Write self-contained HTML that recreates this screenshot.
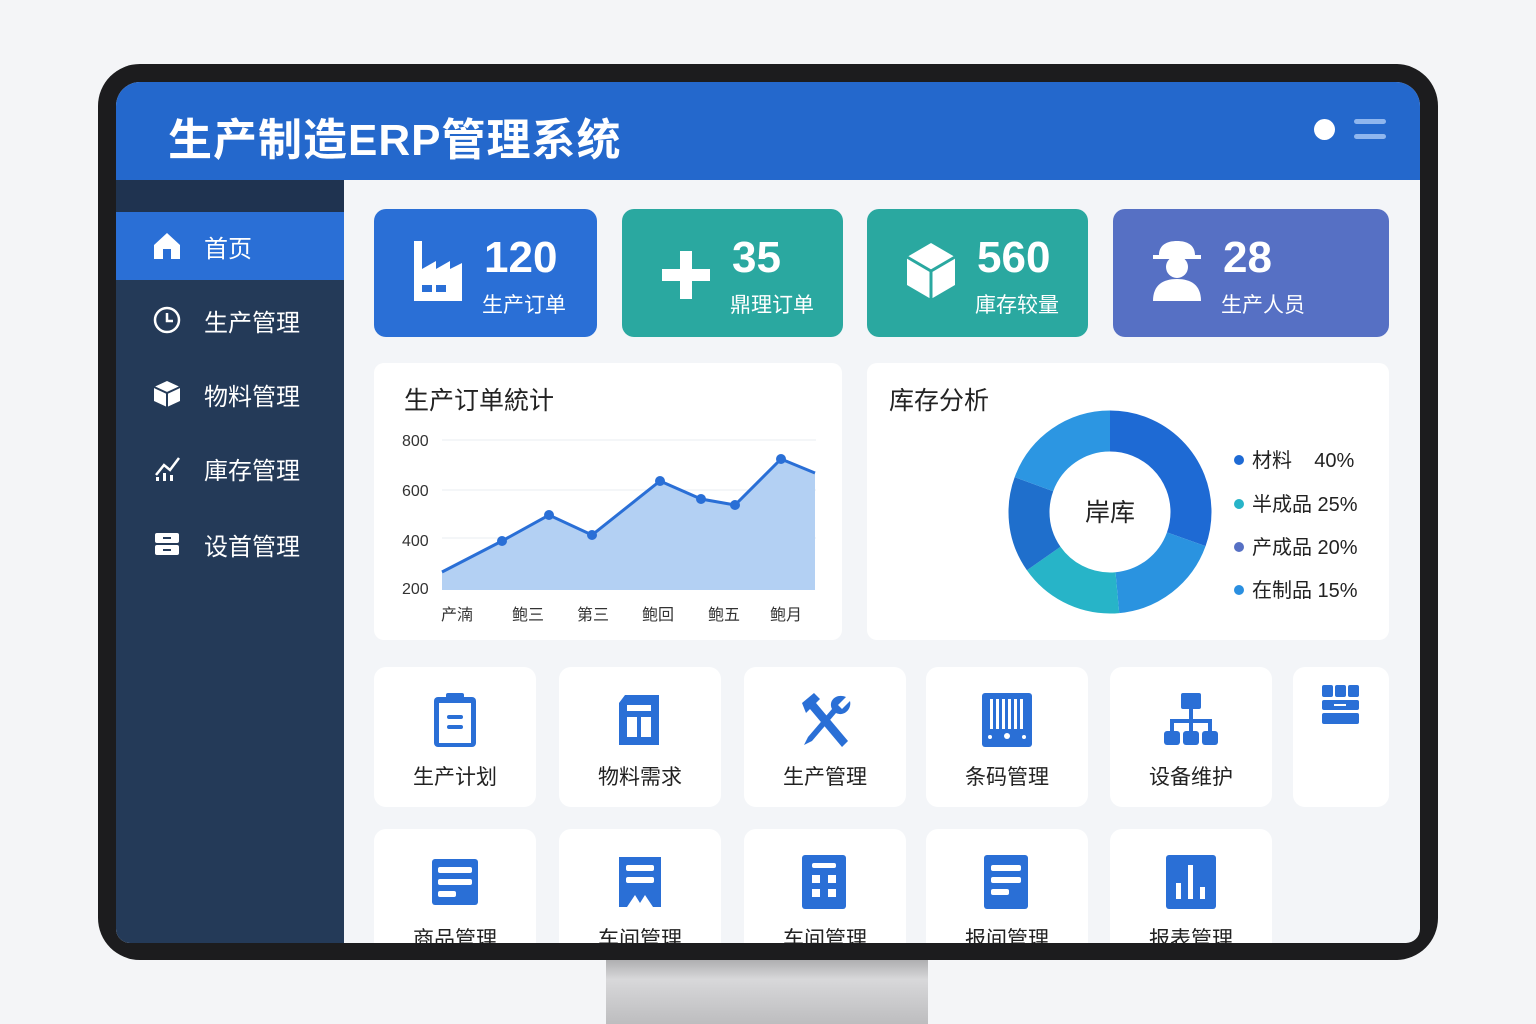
<!DOCTYPE html>
<html><head><meta charset="utf-8"><style>
*{margin:0;padding:0;box-sizing:border-box}
body{width:1536px;height:1024px;background:#f4f5f7;position:relative;overflow:hidden;font-family:"Liberation Sans","Noto Sans CJK SC",sans-serif}
.abs{position:absolute}
.stand{left:606px;top:950px;width:322px;height:74px;background:linear-gradient(#9a9a9c,#d8d8da 40%,#bdbdbf)}
.bezel{left:98px;top:64px;width:1340px;height:896px;background:#1c1c1e;border-radius:42px}
.screen{left:116px;top:82px;width:1304px;height:861px;background:#f3f5f8;border-radius:24px 24px 14px 14px;overflow:hidden}
.header{left:0;top:0;width:1304px;height:98px;background:#2468cc}
.title{left:52px;top:22px;color:#fff;font-size:44px;font-weight:bold;letter-spacing:1px}
.side{left:0;top:98px;width:228px;height:763px;background:#243a58}
.nav{left:0;width:228px;height:68px;color:#fff;font-size:24px;display:flex;align-items:center;padding-left:36px}
.nav svg{margin-right:22px}
.card{top:127px;height:128px;border-radius:12px;color:#fff}
.card .n{position:absolute;left:110px;top:24px;font-size:44px;font-weight:bold}
.card .l{position:absolute;left:108px;top:80px;font-size:21px}
.card svg{position:absolute;left:36px;top:28px}
.panel{background:#fff;border-radius:10px;top:281px;height:277px}
.ptitle{position:absolute;left:30px;top:18px;font-size:25px;color:#222}
.tile{background:#fff;border-radius:12px;width:162px;height:140px}
.tile svg{position:absolute;left:50%;margin-left:-29px;top:24px}
.tile span{position:absolute;left:0;width:100%;text-align:center;top:94px;font-size:21px;color:#222}
.leg{font-size:20px;color:#222;position:absolute;left:1118px}
.leg i{display:inline-block;width:10px;height:10px;border-radius:50%;margin-right:8px;vertical-align:2px}
</style></head><body>
<div class="abs stand"></div>
<div class="abs bezel"></div>
<div class="abs screen">
 <div class="abs header"></div>
 <div class="abs title">生产制造ERP管理系统</div>
 <div class="abs" style="left:1198px;top:37px;width:21px;height:21px;border-radius:50%;background:#fff"></div>
 <div class="abs" style="left:1238px;top:37px;width:32px;height:5px;border-radius:3px;background:#8fb6ee"></div>
 <div class="abs" style="left:1238px;top:52px;width:32px;height:5px;border-radius:3px;background:#8fb6ee"></div>
 <div class="abs side"></div>
 <div class="abs" style="left:0;top:98px;width:228px;height:32px;background:#1f3350"></div>
 <div class="abs nav" style="top:130px;background:#2a6fd6"><svg width="30" height="30" viewBox="0 0 30 30"><path d="M2 14 15 2 28 14V28H19V18H11V28H2Z" fill="#fff"/></svg>首页</div>
 <div class="abs nav" style="top:204px"><svg width="30" height="30" viewBox="0 0 30 30"><circle cx="15" cy="15" r="12" fill="none" stroke="#fff" stroke-width="2.5"/><path d="M15 8V16H21" fill="none" stroke="#fff" stroke-width="2.5"/></svg>生产管理</div>
 <div class="abs nav" style="top:278px"><svg width="30" height="30" viewBox="0 0 30 30"><path d="M15 2 28 8V22L15 28 2 22V8Z" fill="#fff"/><path d="M2 8 15 14 28 8M15 14V28" stroke="#243a58" stroke-width="2" fill="none"/></svg>物料管理</div>
 <div class="abs nav" style="top:352px"><svg width="30" height="30" viewBox="0 0 30 30"><path d="M4 22 12 12 18 17 27 5" fill="none" stroke="#fff" stroke-width="2.5"/><rect x="4" y="24" width="3" height="4" fill="#fff"/><rect x="11" y="20" width="3" height="8" fill="#fff"/><rect x="18" y="22" width="3" height="6" fill="#fff"/></svg>庫存管理</div>
 <div class="abs nav" style="top:428px"><svg width="30" height="30" viewBox="0 0 30 30"><rect x="3" y="4" width="24" height="10" rx="2" fill="#fff"/><rect x="3" y="16" width="24" height="10" rx="2" fill="#fff"/><rect x="11" y="8" width="8" height="2" fill="#243a58"/><rect x="11" y="20" width="8" height="2" fill="#243a58"/></svg>设首管理</div>

 <div class="abs card" style="left:258px;width:223px;background:#2a6fd6"><svg width="56" height="66" viewBox="0 0 56 66"><path d="M4 4H12V32L26 24V32L40 24V32L52 26V64H4Z" fill="#fff"/><rect x="12" y="48" width="10" height="7" fill="#2a6fd6"/><rect x="26" y="48" width="10" height="7" fill="#2a6fd6"/></svg><div class="n">120</div><div class="l">生产订单</div></div>
 <div class="abs card" style="left:506px;width:221px;background:#2aa8a0"><svg width="56" height="66" viewBox="0 0 56 66"><path d="M22 14H34V32H52V44H34V62H22V44H4V32H22Z" fill="#fff"/></svg><div class="n">35</div><div class="l">鼎理订单</div></div>
 <div class="abs card" style="left:751px;width:221px;background:#2aa8a0"><svg width="56" height="66" viewBox="0 0 56 66"><path d="M28 6 52 20V48L28 62 4 48V20Z" fill="#fff"/><path d="M4 20 28 34 52 20M28 34V62" stroke="#2aa8a0" stroke-width="3" fill="none"/></svg><div class="n">560</div><div class="l">庫存较量</div></div>
 <div class="abs card" style="left:997px;width:276px;background:#5670c4"><svg width="56" height="66" viewBox="0 0 56 66"><path d="M10 18C10 8 18 4 28 4S46 8 46 18H52V22H4V18Z" fill="#fff"/><circle cx="28" cy="30" r="11" fill="#fff"/><path d="M4 64C4 48 14 42 28 42S52 48 52 64Z" fill="#fff"/></svg><div class="n">28</div><div class="l">生产人员</div></div>

 <div class="abs panel" style="left:258px;width:468px">
  <div class="ptitle">生产订单統计</div>
  <svg class="abs" style="left:0;top:0" width="468" height="277" viewBox="258 281 468 277">
   <g font-size="16" fill="#333" font-family="Liberation Sans">
    <text x="286" y="364">800</text><text x="286" y="414">600</text><text x="286" y="464">400</text><text x="286" y="512">200</text>
    <text x="325" y="538">产湳</text><text x="396" y="538">鲍三</text><text x="461" y="538">第三</text><text x="526" y="538">鲍回</text><text x="592" y="538">鲍五</text><text x="654" y="538">鲍月</text>
   </g>
   <g stroke="#e8ecf2"><line x1="326" y1="358" x2="700" y2="358"/><line x1="326" y1="408" x2="700" y2="408"/><line x1="326" y1="456" x2="700" y2="456"/></g>
   <path d="M326 490 386 459 433 433 476 453 544 399 585 417 619 423 665 377 699 391V508H326Z" fill="#b3d0f3"/>
   <path d="M326 490 386 459 433 433 476 453 544 399 585 417 619 423 665 377 699 391" fill="none" stroke="#2a6fd6" stroke-width="3"/>
   <g fill="#2a6fd6"><circle cx="386" cy="459" r="5"/><circle cx="433" cy="433" r="5"/><circle cx="476" cy="453" r="5"/><circle cx="544" cy="399" r="5"/><circle cx="585" cy="417" r="5"/><circle cx="619" cy="423" r="5"/><circle cx="665" cy="377" r="5"/></g>
  </svg>
 </div>
 <div class="abs panel" style="left:751px;width:522px">
  <div class="ptitle" style="left:22px">库存分析</div>
  <svg class="abs" style="left:140px;top:46px" width="206" height="206" viewBox="0 0 206 206">
   <g transform="rotate(-90 103 103)" fill="none" stroke-width="41">
    <circle cx="103" cy="103" r="81" stroke="#1e6ad4" stroke-dasharray="155 509" stroke-dashoffset="0"/>
    <circle cx="103" cy="103" r="81" stroke="#2a93e0" stroke-dasharray="92 509" stroke-dashoffset="-155"/>
    <circle cx="103" cy="103" r="81" stroke="#27b4c8" stroke-dasharray="85 509" stroke-dashoffset="-247"/>
    <circle cx="103" cy="103" r="81" stroke="#1f6fcc" stroke-dasharray="78 509" stroke-dashoffset="-332"/>
    <circle cx="103" cy="103" r="81" stroke="#2c96e2" stroke-dasharray="99 509" stroke-dashoffset="-410"/>
   </g>
   <text x="103" y="112" text-anchor="middle" font-size="25" fill="#222" font-family="Liberation Sans,Noto Sans CJK SC">岸库</text>
  </svg>
 </div>
 <div class="leg" style="top:362px"><i style="background:#1e6ad4"></i>材料&nbsp;&nbsp;&nbsp;&nbsp;40%</div>
 <div class="leg" style="top:406px"><i style="background:#27b4c8"></i>半成品 25%</div>
 <div class="leg" style="top:449px"><i style="background:#5670c4"></i>产成品 20%</div>
 <div class="leg" style="top:492px"><i style="background:#2a8fe0"></i>在制品 15%</div>

 <div class="abs tile" style="left:258px;top:585px"><svg width="58" height="58" viewBox="0 0 58 58"><rect x="8" y="6" width="42" height="50" rx="4" fill="#2a6fd6"/><rect x="13" y="12" width="32" height="40" fill="#fff"/><rect x="20" y="2" width="18" height="8" rx="2" fill="#2a6fd6"/><rect x="21" y="24" width="16" height="4" rx="2" fill="#2a6fd6"/><rect x="21" y="34" width="16" height="4" rx="2" fill="#2a6fd6"/></svg><span>生产计划</span></div>
 <div class="abs tile" style="left:443px;top:585px"><svg width="58" height="58" viewBox="0 0 58 58"><path d="M14 4H48V54H8V12Z" rx="4" fill="#2a6fd6"/><rect x="16" y="14" width="24" height="6" fill="#fff"/><rect x="16" y="26" width="10" height="20" fill="#fff"/><rect x="30" y="26" width="10" height="20" fill="#fff"/></svg><span>物料需求</span></div>
 <div class="abs tile" style="left:628px;top:585px"><svg width="58" height="58" viewBox="0 0 58 58"><path d="M6 12 18 2 24 8 20 12 52 50 46 56 14 18 10 22Z" fill="#2a6fd6"/><path d="M50 6 42 14 46 18 54 10C56 18 48 26 40 22L16 50 8 54 12 46 36 18C32 10 40 2 50 6Z" fill="#2a6fd6"/></svg><span>生产管理</span></div>
 <div class="abs tile" style="left:810px;top:585px"><svg width="58" height="58" viewBox="0 0 58 58"><rect x="4" y="2" width="50" height="54" rx="3" fill="#2a6fd6"/><g fill="#fff"><rect x="12" y="8" width="3" height="30"/><rect x="18" y="8" width="3" height="30"/><rect x="24" y="8" width="3" height="30"/><rect x="30" y="8" width="3" height="30"/><rect x="36" y="8" width="3" height="30"/><rect x="42" y="8" width="3" height="30"/><circle cx="12" cy="46" r="2"/><circle cx="29" cy="45" r="3"/><circle cx="46" cy="46" r="2"/></g></svg><span>条码管理</span></div>
 <div class="abs tile" style="left:994px;top:585px"><svg width="58" height="58" viewBox="0 0 58 58"><g fill="#2a6fd6"><rect x="19" y="2" width="20" height="16" rx="2"/><rect x="27" y="18" width="4" height="12"/><rect x="8" y="28" width="42" height="4"/><rect x="8" y="28" width="4" height="12"/><rect x="46" y="28" width="4" height="12"/><rect x="27" y="28" width="4" height="12"/><rect x="2" y="40" width="16" height="14" rx="3"/><rect x="21" y="40" width="16" height="14" rx="3"/><rect x="40" y="40" width="16" height="14" rx="3"/></g></svg><span>设备维护</span></div>
 <div class="abs tile" style="left:1177px;top:585px;width:96px"><svg width="58" height="58" viewBox="0 0 58 58" style="top:14px"><g fill="#2a6fd6"><rect x="10" y="4" width="11" height="12" rx="2"/><rect x="23" y="4" width="11" height="12" rx="2"/><rect x="36" y="4" width="11" height="12" rx="2"/><rect x="10" y="19" width="37" height="10" rx="2"/><rect x="10" y="32" width="37" height="11" rx="2"/></g><rect x="22" y="23" width="12" height="2" fill="#fff"/></svg></div>

 <div class="abs tile" style="left:258px;top:747px"><svg width="58" height="58" viewBox="0 0 58 58"><rect x="6" y="6" width="46" height="46" rx="3" fill="#2a6fd6"/><rect x="12" y="14" width="34" height="6" rx="2" fill="#fff"/><rect x="12" y="26" width="34" height="6" rx="2" fill="#fff"/><rect x="12" y="38" width="18" height="6" rx="2" fill="#fff"/></svg><span>商品管理</span></div>
 <div class="abs tile" style="left:443px;top:747px"><svg width="58" height="58" viewBox="0 0 58 58"><path d="M8 4H50V54H42L34 42 29 50 24 42 16 54H8Z" fill="#2a6fd6"/><rect x="15" y="12" width="28" height="6" rx="2" fill="#fff"/><rect x="15" y="24" width="28" height="6" rx="2" fill="#fff"/></svg><span>车间管理</span></div>
 <div class="abs tile" style="left:628px;top:747px"><svg width="58" height="58" viewBox="0 0 58 58"><rect x="6" y="2" width="44" height="54" rx="3" fill="#2a6fd6"/><g fill="#fff"><rect x="16" y="10" width="24" height="5" rx="2"/><rect x="16" y="22" width="8" height="8"/><rect x="32" y="22" width="8" height="8"/><rect x="16" y="36" width="8" height="8"/><rect x="32" y="36" width="8" height="8"/></g></svg><span>车间管理</span></div>
 <div class="abs tile" style="left:810px;top:747px"><svg width="58" height="58" viewBox="0 0 58 58"><rect x="6" y="2" width="44" height="54" rx="3" fill="#2a6fd6"/><g fill="#fff"><rect x="13" y="12" width="30" height="6" rx="2"/><rect x="13" y="24" width="30" height="6" rx="2"/><rect x="13" y="36" width="18" height="6" rx="2"/></g></svg><span>报间管理</span></div>
 <div class="abs tile" style="left:994px;top:747px"><svg width="58" height="58" viewBox="0 0 58 58"><rect x="4" y="2" width="50" height="54" rx="3" fill="#2a6fd6"/><g fill="#fff"><rect x="14" y="30" width="5" height="16"/><rect x="26" y="12" width="5" height="34"/><rect x="38" y="34" width="5" height="12"/></g></svg><span>报表管理</span></div>
</div>
</body></html>
